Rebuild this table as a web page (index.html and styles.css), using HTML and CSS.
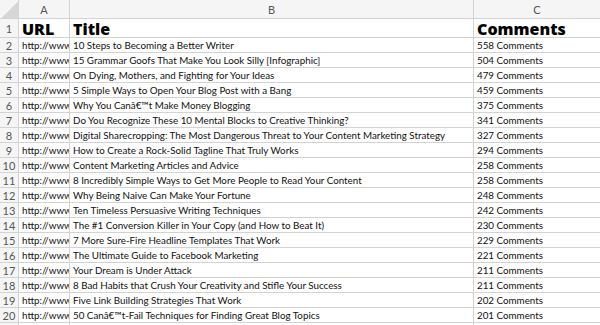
FILE: index.html
```html
<!DOCTYPE html>
<html>
<head>
<meta charset="utf-8">
<link rel="stylesheet" href="styles.css">
</head>
<body>
<div class="sheet">
  <div class="hd corner"></div><div class="hd col">A</div><div class="hd col">B</div><div class="hd col">C</div>
  <div class="hd rn">1</div><div class="c big">URL</div><div class="c big">Title</div><div class="c big">Comments</div>
  <div class="hd rn">2</div><div class="c">http://www.copyblogger.com</div><div class="c">10 Steps to Becoming a Better Writer</div><div class="c">558 Comments</div>
  <div class="hd rn">3</div><div class="c">http://www.copyblogger.com</div><div class="c">15 Grammar Goofs That Make You Look Silly [Infographic]</div><div class="c">504 Comments</div>
  <div class="hd rn">4</div><div class="c">http://www.copyblogger.com</div><div class="c">On Dying, Mothers, and Fighting for Your Ideas</div><div class="c">479 Comments</div>
  <div class="hd rn">5</div><div class="c">http://www.copyblogger.com</div><div class="c">5 Simple Ways to Open Your Blog Post with a Bang</div><div class="c">459 Comments</div>
  <div class="hd rn">6</div><div class="c">http://www.copyblogger.com</div><div class="c">Why You Canâ€™t Make Money Blogging</div><div class="c">375 Comments</div>
  <div class="hd rn">7</div><div class="c">http://www.copyblogger.com</div><div class="c">Do You Recognize These 10 Mental Blocks to Creative Thinking?</div><div class="c">341 Comments</div>
  <div class="hd rn">8</div><div class="c">http://www.copyblogger.com</div><div class="c">Digital Sharecropping: The Most Dangerous Threat to Your Content Marketing Strategy</div><div class="c">327 Comments</div>
  <div class="hd rn">9</div><div class="c">http://www.copyblogger.com</div><div class="c">How to Create a Rock-Solid Tagline That Truly Works</div><div class="c">294 Comments</div>
  <div class="hd rn">10</div><div class="c">http://www.copyblogger.com</div><div class="c">Content Marketing Articles and Advice</div><div class="c">258 Comments</div>
  <div class="hd rn">11</div><div class="c">http://www.copyblogger.com</div><div class="c">8 Incredibly Simple Ways to Get More People to Read Your Content</div><div class="c">258 Comments</div>
  <div class="hd rn">12</div><div class="c">http://www.copyblogger.com</div><div class="c">Why Being Naive Can Make Your Fortune</div><div class="c">248 Comments</div>
  <div class="hd rn">13</div><div class="c">http://www.copyblogger.com</div><div class="c">Ten Timeless Persuasive Writing Techniques</div><div class="c">242 Comments</div>
  <div class="hd rn">14</div><div class="c">http://www.copyblogger.com</div><div class="c">The #1 Conversion Killer in Your Copy (and How to Beat It)</div><div class="c">230 Comments</div>
  <div class="hd rn">15</div><div class="c">http://www.copyblogger.com</div><div class="c">7 More Sure-Fire Headline Templates That Work</div><div class="c">229 Comments</div>
  <div class="hd rn">16</div><div class="c">http://www.copyblogger.com</div><div class="c">The Ultimate Guide to Facebook Marketing</div><div class="c">221 Comments</div>
  <div class="hd rn">17</div><div class="c">http://www.copyblogger.com</div><div class="c">Your Dream is Under Attack</div><div class="c">211 Comments</div>
  <div class="hd rn">18</div><div class="c">http://www.copyblogger.com</div><div class="c">8 Bad Habits that Crush Your Creativity and Stifle Your Success</div><div class="c">211 Comments</div>
  <div class="hd rn">19</div><div class="c">http://www.copyblogger.com</div><div class="c">Five Link Building Strategies That Work</div><div class="c">202 Comments</div>
  <div class="hd rn">20</div><div class="c">http://www.copyblogger.com</div><div class="c">50 Canâ€™t-Fail Techniques for Finding Great Blog Topics</div><div class="c">201 Comments</div>
  <div class="hd rn"></div><div class="c"></div><div class="c"></div><div class="c"></div>
</div>
</body>
</html>
```
FILE: styles.css
```css
html, body {
  margin: 0;
  padding: 0;
  background: #fff;
  overflow: hidden;
}
.sheet {
  display: grid;
  grid-template-columns: 18px 50px 403px 126px;
  grid-template-rows: 18px 18px repeat(20, 14px);
  gap: 1px;
  background: #d3d3d3;
  width: 600px;
  font-family: "Lato", "Open Sans", sans-serif;
}
.hd {
  background: #f5f5f5;
  color: #555;
  font-size: 11px;
  display: flex;
  align-items: center;
  justify-content: center;
}
.corner {
  background: linear-gradient(135deg, #f5f5f5 55%, #d6d6d6 55%);
}
.rn {
  font-size: 11px;
}
.c {
  background: #fff;
  color: #111;
  font-size: 9.8px;
  line-height: 14px;
  padding-left: 3px;
  white-space: nowrap;
  overflow: hidden;
}
.big {
  font-family: "Open Sans", sans-serif;
  font-size: 16px;
  font-weight: 800;
  line-height: 18px;
  color: #000;
  padding-left: 3px;
  padding-top: 1px;
}
```
